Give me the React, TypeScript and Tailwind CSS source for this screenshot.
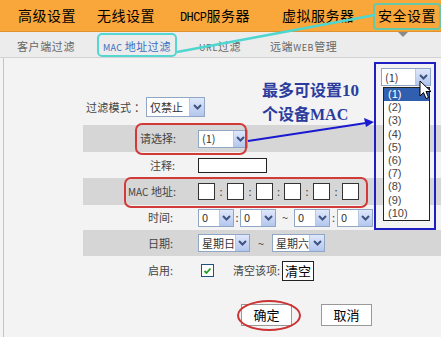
import React from "react";

const Chevron = () => (
  <svg width="9" height="6" viewBox="0 0 9 6">
    <path d="M1 1 L4.5 4.5 L8 1" fill="none" stroke="#3d5480" strokeWidth="2" />
  </svg>
);

function Select({ text, tw, aw = 15, h = 18, className = "" }: { text: string; tw: number; aw?: number; h?: number; className?: string }) {
  return (
    <div className={"flex border border-[#8fa6c4] bg-white " + className} style={{ height: h }}>
      <div className="flex items-center overflow-hidden whitespace-nowrap pl-[3px] text-[11px] text-[#333]" style={{ width: tw }}>
        {text}
      </div>
      <div
        className="flex items-center justify-center border-l border-[#b7c8e6] bg-gradient-to-b from-[#dfe8fb] to-[#b4c6ee]"
        style={{ width: aw }}
      >
        <Chevron />
      </div>
    </div>
  );
}

const MacBox = () => <div className="h-[17px] w-[17px] border border-[#333] bg-white" />;

export default function App() {
  return (
    <div className="relative h-[337px] w-[441px] overflow-hidden whitespace-nowrap bg-[#f3f3f3] font-['Noto_Sans_CJK_SC',sans-serif]">
      {/* top nav */}
      <div className="flex h-[32px] items-center border-b border-[#e0922e] bg-[#f9a63b] pl-[18px] text-[14px] tracking-[0.5px] text-black">
        <div className="w-[79px]">高级设置</div>
        <div className="w-[83px]">无线设置</div>
        <div className="w-[102px]">
          <span className="font-['Liberation_Mono',monospace] text-[12px] tracking-[-0.6px]">DHCP</span>服务器
        </div>
        <div className="w-[96px]">虚拟服务器</div>
        <div>安全设置</div>
      </div>
      {/* sub nav */}
      <div className="flex h-[26px] items-center border-b border-[#d2d2d2] bg-[#ececec] pl-[17px] pt-[3px] text-[11px] tracking-[0.6px] text-[#666]">
        <div className="w-[86px]">客户端过滤</div>
        <div className="w-[96px] text-[#3a6cc0]">
          <span className="text-[9px] tracking-[0.3px]">MAC </span>地址过滤
        </div>
        <div className="w-[71px]">
          <span className="text-[9px]">URL</span>过滤
        </div>
        <div>
          远端<span className="text-[9px]">WEB</span>管理
        </div>
      </div>

      {/* content */}
      <div className="ml-[3px] h-[279px] border-l border-[#c4c4c4] bg-[#f3f3f3]">
        <div className="ml-[79px] pt-[37px] text-[11px] text-[#444]">
          <div className="flex h-[24px] items-center">
            <div className="w-[63px] pl-[3px] tracking-[0.3px]">过滤模式 ：</div>
            <Select text="仅禁止" tw={42} h={20} />
          </div>

          <div className="mt-[6px] flex h-[27px] items-center bg-[#d6d6d6]">
            <div className="w-[115px] pl-[57px]">请选择:</div>
            <Select text="(1)" tw={34} aw={14} />
          </div>

          <div className="flex h-[26px] items-center">
            <div className="w-[115px] pl-[67px]">注释:</div>
            <div className="h-[15px] w-[69px] border border-[#222] bg-white" />
          </div>

          <div className="flex h-[27px] items-center bg-[#d6d6d6]">
            <div className="w-[115px] pl-[45px]">
              <span className="text-[10px]">MAC</span> 地址:
            </div>
            <div className="flex items-center">
              <MacBox />
              <span className="w-[12px] text-center">:</span>
              <MacBox />
              <span className="w-[12px] text-center">:</span>
              <MacBox />
              <span className="w-[11px] text-center">:</span>
              <MacBox />
              <span className="w-[12px] text-center">:</span>
              <MacBox />
              <span className="w-[12px] text-center">:</span>
              <MacBox />
            </div>
          </div>

          <div className="flex h-[25px] items-center">
            <div className="w-[115px] pl-[65px]">时间:</div>
            <Select text="0" tw={20} aw={14} />
            <span className="w-[6px] text-center">:</span>
            <Select text="0" tw={20} aw={14} />
            <span className="w-[18px] text-center">~</span>
            <Select text="0" tw={20} aw={14} />
            <span className="w-[7px] text-center">:</span>
            <Select text="0" tw={20} aw={14} />
          </div>

          <div className="flex h-[26px] items-center bg-[#d6d6d6]">
            <div className="w-[115px] pl-[65px]">日期:</div>
            <Select text="星期日" tw={36} aw={14} />
            <span className="w-[22px] text-center">~</span>
            <Select text="星期六" tw={36} aw={15} />
          </div>

          <div className="flex h-[27px] items-center pt-[2px]">
            <div className="w-[118px] pl-[65px]">启用:</div>
            <div className="flex h-[13px] w-[13px] items-center justify-center border border-[#1c5180] bg-white">
              <svg width="9" height="8" viewBox="0 0 9 8">
                <path d="M1.5 4 L3.5 6 L7.5 1.5" fill="none" stroke="#21a121" strokeWidth="1.8" />
              </svg>
            </div>
            <div className="ml-[19px] w-[49px]">清空该项:</div>
            <div className="flex h-[20px] w-[32px] items-center justify-center border border-[#222] bg-white text-[13px] text-black">
              清空
            </div>
          </div>

          <div className="ml-[158px] mt-[21px] flex gap-[29px] text-[13px] text-black">
            <div className="flex h-[22px] w-[51px] items-center justify-center border border-[#999] bg-white">确定</div>
            <div className="flex h-[22px] w-[51px] items-center justify-center border border-[#999] bg-white">取消</div>
          </div>
        </div>
      </div>

      {/* annotation overlays */}
      <div className="absolute left-[97px] top-[33px] h-[24px] w-[80px] rounded-[5px] border-2 border-[#56d6d2]" />
      <div className="absolute left-[373px] top-[3px] h-[27px] w-[68px] rounded-[4px] border-2 border-[#66c8a6]" />
      <div className="absolute left-[135px] top-[123px] h-[32px] w-[112px] rounded-[7px] border-2 border-[#d23a3a]" />
      <div className="absolute left-[124px] top-[177px] h-[31px] w-[244px] rounded-[7px] border-2 border-[#d23a3a]" />
      <div className="absolute left-[237px] top-[300px] h-[31px] w-[64px] rounded-[50%] border-2 border-[#cc3333]" />

      <div className="absolute left-[262px] top-[78px] font-['Noto_Sans_CJK_SC',serif] text-[16px] font-bold leading-[22px] text-[#2b3b9e]">
        <div>
          最多可设置<span className="font-['Liberation_Serif',serif] text-[17px]">10</span>
        </div>
        <div>
          个设备<span className="font-['Liberation_Serif',serif] text-[16px]">MAC</span>
        </div>
      </div>

      <svg className="pointer-events-none absolute left-0 top-0" width="441" height="337">
        <line x1="177" y1="52" x2="375" y2="15" stroke="#4fd6cf" strokeWidth="2.5" />
        <polygon points="398,32 408,32 403,37" fill="#8a8a8a" />
        <line x1="248" y1="141" x2="366" y2="123" stroke="#1a1ad0" strokeWidth="2" />
        <polygon points="374,122 364,118 366,127" fill="#1a1ad0" />
      </svg>

      {/* dropdown frame */}
      <div className="absolute left-[374px] top-[62px] h-[168px] w-[62px] border-2 border-[#1f1fc4]">
        <div className="absolute left-[5px] top-[4px]">
          <Select text="(1)" tw={33} aw={15} />
        </div>
        <div className="absolute left-[7px] top-[23px] w-[47px] border border-[#222] bg-white font-['Liberation_Sans',sans-serif] text-[11px] leading-[13.2px] text-[#444]">
          {["(1)", "(2)", "(3)", "(4)", "(5)", "(6)", "(7)", "(8)", "(9)", "(10)"].map((t, i) => (
            <div key={t} className={i === 0 ? "h-[13.2px] bg-[#2f5fae] pl-[4px] text-white" : "h-[13.2px] pl-[4px]"}>
              {t}
            </div>
          ))}
        </div>
      </div>

      <svg className="pointer-events-none absolute left-[419px] top-[80px]" width="14" height="20" viewBox="0 0 14 20">
        <path d="M1 1 L1 16 L4.5 12.5 L7 18.5 L9.5 17.5 L7 11.5 L12 11.5 Z" fill="white" stroke="black" strokeWidth="1" />
      </svg>
    </div>
  );
}
